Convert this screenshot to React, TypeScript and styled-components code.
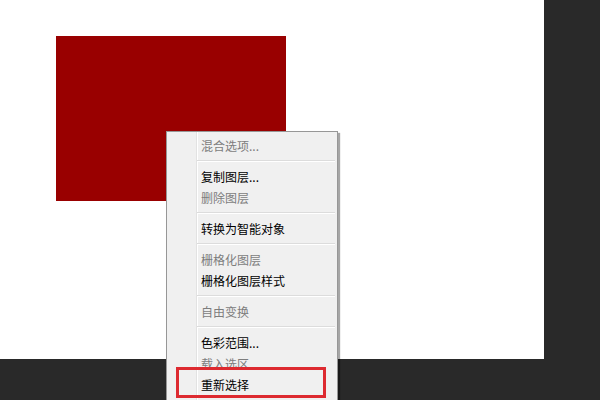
import React from "react";
import styled, { createGlobalStyle } from "styled-components";

const Global = createGlobalStyle`
  html, body { margin: 0; padding: 0; background: #292929; }
  body { width: 600px; height: 400px; overflow: hidden; font-family: "Noto Sans CJK SC", "Noto Sans", sans-serif; }
`;

const Stage = styled.div`
  position: relative;
  width: 600px;
  height: 400px;
  background: #292929;
  overflow: hidden;
`;

const Canvas = styled.div`
  position: relative;
  width: 544px;
  height: 359px;
  background: #ffffff;
`;

const Shape = styled.div`
  position: absolute;
  left: 56px;
  top: 36px;
  width: 230px;
  height: 165px;
  background: #990000;
`;

const Menu = styled.div`
  position: absolute;
  left: 166px;
  top: 131px;
  width: 172px;
  height: 290px;
  box-sizing: border-box;
  border: 1px solid #979797;
  padding: 3px 0 0 0;
  background:
    linear-gradient(to right, transparent 29px, #e2e2e2 29px, #e2e2e2 30px, #ffffff 30px, #ffffff 31px, transparent 31px),
    #f0f0f0;
  box-shadow: 2px 2px 1px rgba(0, 0, 0, 0.35);
  display: flex;
  flex-direction: column;
`;

const Item = styled.div<{ $disabled?: boolean }>`
  height: 21px;
  line-height: 21px;
  padding-left: 34px;
  font-size: 12px;
  color: ${(p) => (p.$disabled ? "#7d7d7d" : "#000000")};
  white-space: nowrap;
`;

const Separator = styled.div`
  height: 10px;
  margin-left: 30px;
  margin-right: 2px;
  display: flex;
  flex-direction: column;
  justify-content: center;
  &::before {
    content: "";
    display: block;
    height: 1px;
    background: #dcdcdc;
  }
  &::after {
    content: "";
    display: block;
    height: 1px;
    background: #ffffff;
  }
`;

const Highlight = styled.div`
  position: absolute;
  left: 176px;
  top: 367px;
  width: 150px;
  height: 31px;
  box-sizing: border-box;
  border: 3px solid #dd2a30;
`;

type Entry = { label: string; disabled?: boolean } | "sep";

const entries: Entry[] = [
  { label: "混合选项...", disabled: true },
  "sep",
  { label: "复制图层..." },
  { label: "删除图层", disabled: true },
  "sep",
  { label: "转换为智能对象" },
  "sep",
  { label: "栅格化图层", disabled: true },
  { label: "栅格化图层样式" },
  "sep",
  { label: "自由变换", disabled: true },
  "sep",
  { label: "色彩范围..." },
  { label: "载入选区...", disabled: true },
  { label: "重新选择" },
];

export default function App() {
  return (
    <>
      <Global />
      <Stage>
        <Canvas>
          <Shape />
        </Canvas>
        <Menu>
          {entries.map((e, i) =>
            e === "sep" ? (
              <Separator key={i} />
            ) : (
              <Item key={i} $disabled={e.disabled}>
                {e.label}
              </Item>
            )
          )}
        </Menu>
        <Highlight />
      </Stage>
    </>
  );
}
